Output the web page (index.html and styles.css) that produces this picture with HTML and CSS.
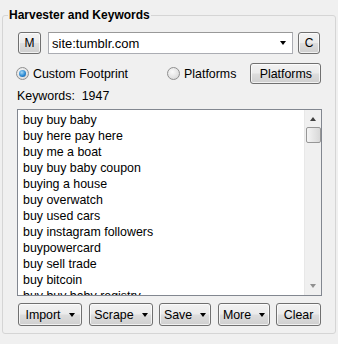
FILE: index.html
```html
<!DOCTYPE html>
<html lang="en">
<head>
  <meta charset="UTF-8" />
  <title>Harvester and Keywords</title>
  <link rel="stylesheet" href="styles.css">
</head>
<body>

  <fieldset class="group">
    <legend>Harvester and Keywords</legend>

    <div class="row row-footprint">
      <button class="btn btn-sq">M</button>
      <div class="combo">
        <span>site:tumblr.com</span>
        <span class="caret"></span>
      </div>
      <button class="btn btn-sq btn-c">C</button>
    </div>

    <div class="row row-mode">
      <label class="radio checked"><span class="dot"></span>Custom Footprint</label>
      <label class="radio radio-plat"><span class="dot"></span>Platforms</label>
      <button class="btn btn-plat">Platforms</button>
    </div>

    <div class="count">Keywords:&nbsp; 1947</div>

    <div class="listbox">
      <ul class="items">
        <li>buy buy baby</li>
        <li>buy here pay here</li>
        <li>buy me a boat</li>
        <li>buy buy baby coupon</li>
        <li>buying a house</li>
        <li>buy overwatch</li>
        <li>buy used cars</li>
        <li>buy instagram followers</li>
        <li>buypowercard</li>
        <li>buy sell trade</li>
        <li>buy bitcoin</li>
        <li>buy buy baby registry</li>
      </ul>
      <div class="vscroll">
        <span class="arr up"></span>
        <span class="thumb"></span>
        <span class="fill"></span>
        <span class="arr down"></span>
      </div>
    </div>

    <div class="row row-actions">
      <button class="btn btn-menu w-import">Import <span class="caret"></span></button>
      <button class="btn btn-menu w-scrape">Scrape <span class="caret"></span></button>
      <button class="btn btn-menu w-save">Save <span class="caret"></span></button>
      <button class="btn btn-menu w-more">More <span class="caret"></span></button>
      <button class="btn w-clear">Clear</button>
    </div>
  </fieldset>

</body>
</html>
```

FILE: styles.css
```css
* {
  box-sizing: border-box;
}

body {
  margin: 0;
  padding-top: 8px;
  background: #f0f0f0;
  font-family: "Liberation Sans", Arial, sans-serif;
  font-size: 12px;
  color: #000;
  width: 338px;
  height: 344px;
  overflow: hidden;
}

.group {
  margin: 0 2px 0 2px;
  width: 334px;
  height: 326px;
  padding: 0 13px 0 14px;
  border: 1px solid #d5d5d5;
  border-radius: 3px;
}

.group legend {
  font-weight: bold;
  line-height: 14px;
  padding: 0 1px;
  margin-left: -9px;
}

.row {
  display: flex;
  align-items: center;
}

/* buttons */
.btn {
  font-family: inherit;
  font-size: 12px;
  color: #000;
  height: 22px;
  padding: 0;
  border: 1px solid #707070;
  border-radius: 3px;
  background: linear-gradient(#f2f2f2 0%, #ebebeb 48%, #dddddd 52%, #cfcfcf 100%);
  box-shadow: inset 0 0 0 1px rgba(255, 255, 255, 0.7);
  display: flex;
  align-items: center;
  justify-content: center;
}

.caret {
  display: inline-block;
  width: 0;
  height: 0;
  border-left: 3.5px solid transparent;
  border-right: 3.5px solid transparent;
  border-top: 4px solid #000;
}

.row-footprint {
  margin-top: 10px;
}

.btn-sq {
  width: 23px;
  margin-left: 1px;
}

.btn-c {
  width: 22px;
  margin-left: 5px;
}

.combo {
  margin-left: 7px;
  width: 245px;
  height: 22px;
  background: #fff;
  border: 1px solid #abadb3;
  border-top-color: #999;
  display: flex;
  align-items: center;
  justify-content: space-between;
  padding: 0 6px 0 3px;
  font-size: 13px;
}

.row-mode {
  margin-top: 9px;
  height: 21px;
}

.radio {
  display: flex;
  align-items: center;
  font-size: 12.4px;
}

.radio .dot {
  width: 13px;
  height: 13px;
  border-radius: 50%;
  border: 1px solid #8f8f8f;
  background: radial-gradient(circle at 40% 35%, #fafafa 0%, #e2e2e2 60%, #cfcfcf 100%);
  margin-right: 4px;
  position: relative;
}

.radio.checked .dot::after {
  content: "";
  position: absolute;
  left: 2px;
  top: 2px;
  width: 7px;
  height: 7px;
  border-radius: 50%;
  background: radial-gradient(circle at 40% 35%, #a9d9f5 0%, #2a8ad4 55%, #1b4f8c 100%);
}

.radio.checked {
  margin-left: -1px;
}

.radio-plat {
  margin-left: 39px;
}

.btn-plat {
  width: 71px;
  height: 21px;
  margin-left: 14px;
  font-size: 12.4px;
}

.count {
  margin-top: 5px;
  line-height: 14px;
  font-size: 12.4px;
}

/* keyword list */
.listbox {
  margin-top: 6px;
  height: 187px;
  width: 305px;
  border: 1px solid #828790;
  background: #fff;
  display: flex;
  overflow: hidden;
}

.items {
  flex: 1;
  list-style: none;
  margin: 0;
  padding: 2px 0 0 5px;
  font-size: 12.4px;
  line-height: 16px;
  overflow: hidden;
}

.vscroll {
  width: 17px;
  background: #f0f0f0;
  border-left: 1px solid #e8e8e8;
  display: flex;
  flex-direction: column;
  align-items: center;
}

.arr {
  width: 0;
  height: 0;
  border-left: 3.5px solid transparent;
  border-right: 3.5px solid transparent;
}

.arr.up {
  margin-top: 7px;
  border-bottom: 4px solid #404040;
}

.arr.down {
  margin-bottom: 7px;
  border-top: 4px solid #909090;
}

.thumb {
  margin-top: 6px;
  width: 15px;
  height: 16px;
  border: 1px solid #969696;
  border-radius: 2px;
  background: linear-gradient(90deg, #f4f4f4, #e6e6e6 50%, #d8d8d8);
}

.fill {
  flex: 1;
}

/* bottom action buttons */
.row-actions {
  margin-top: 7px;
  gap: 6px;
}

.row-actions .btn {
  height: 23px;
  font-size: 12.4px;
}

.btn-menu {
  gap: 8px;
}

.w-import { width: 64px; margin-left: 1px; }
.w-scrape { width: 64px; margin-left: 1px; }
.w-save { width: 52px; }
.w-more { width: 52px; margin-left: 1px; }
.w-clear { width: 45px; }
```
